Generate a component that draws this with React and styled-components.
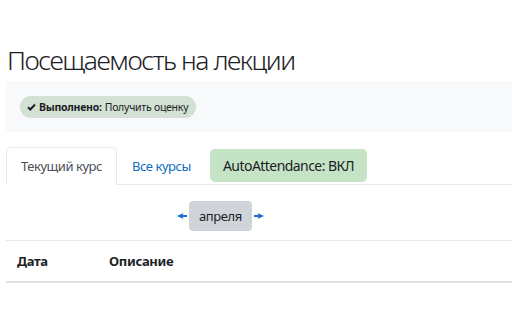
import * as React from "react"
import styled, { createGlobalStyle } from "styled-components"

const GlobalStyle = createGlobalStyle`
  html, body {
    margin: 0;
    padding: 0;
    background: #fff;
    font-family: "Noto Sans", "Open Sans", sans-serif;
    color: #1d2125;
  }
`

const Page = styled.div`
  padding: 0 0 0 6px;
  width: 512px;
  overflow: hidden;
`

const Title = styled.h2`
  margin: 0;
  padding: 44px 0 0 1px;
  height: 37px;
  font-size: 26.5px;
  font-weight: 300;
  line-height: 32px;
  color: #1d2125;
  letter-spacing: -1.45px;
`

const Activity = styled.div`
  background: #f8f9fa;
  height: 51px;
  display: flex;
  align-items: center;
  padding-left: 14px;
  border-radius: 4px 0 0 4px;
`

const Badge = styled.span`
  display: inline-flex;
  align-items: center;
  gap: 3px;
  height: 22px;
  padding: 0 8px 0 7px;
  border-radius: 11px;
  background: #d3e1d4;
  font-size: 10.5px;
  letter-spacing: -0.25px;
  color: #1d2125;

  b {
    font-weight: 700;
  }
`

const Tabs = styled.div`
  margin-top: 15px;
  display: flex;
  align-items: flex-end;
  border-bottom: 1px solid #e6e8eb;
  height: 37px;
`

const Tab = styled.a`
  display: flex;
  align-items: center;
  box-sizing: border-box;
  padding: 0 14px;
  margin-bottom: -1px;
  height: 38px;
  font-size: 13px;
  letter-spacing: -0.45px;
  text-decoration: none;
  color: ${p => (p.$active ? "#495057" : "#0f6cbf")};
  background: ${p => (p.$active ? "#fff" : "transparent")};
  border: 1px solid ${p => (p.$active ? "#e6e8eb" : "transparent")};
  border-bottom-color: ${p => (p.$active ? "#fff" : "transparent")};
  border-radius: 5px 5px 0 0;
`

const ToggleButton = styled.button`
  align-self: center;
  margin-left: 4px;
  height: 33px;
  padding: 0 13px;
  border: none;
  border-radius: 5px;
  background: #c5e4c6;
  font-family: inherit;
  font-size: 14px;
  letter-spacing: -0.55px;
  color: #1d2125;
`

const MonthRow = styled.div`
  display: flex;
  align-items: center;
  padding: 6px 0 0 171px;
  height: 49px;
  gap: 2px;
  border-bottom: 1px solid #e6e8eb;
`

const Month = styled.span`
  display: inline-flex;
  align-items: center;
  height: 30px;
  padding: 0 10px;
  border-radius: 4px;
  background: #ced4da;
  font-size: 13px;
  letter-spacing: -0.4px;
  color: #1d2125;
`

const TableHead = styled.div`
  display: grid;
  grid-template-columns: 92px 1fr;
  height: 40px;
  align-items: center;
  padding-left: 11px;
  border-bottom: 2px solid #dee2e6;
`

const Th = styled.span`
  font-size: 13px;
  font-weight: 700;
  letter-spacing: -0.3px;
  color: #1d2125;
`

const Arrow = ({ dir }) => (
  <svg width="10" height="6" viewBox="0 0 10 6">
    <g transform={dir === "right" ? "translate(10 0) scale(-1 1)" : undefined}>
      <path d="M0 3 L6.5 0 L5.5 2 L10 2 L10 4 L5.5 4 L6.5 6 Z" fill="#1a6dc9" />
    </g>
  </svg>
)

const Check = () => (
  <svg width="9" height="8" viewBox="0 0 9 8">
    <path d="M1 4.2 L3.3 6.5 L8 1.5" stroke="#1d2125" strokeWidth="2" fill="none" />
  </svg>
)

export default function App() {
  return (
    <Page>
      <GlobalStyle />
      <Title>Посещаемость на лекции</Title>
      <Activity>
        <Badge>
          <Check />
          <b>Выполнено:</b> Получить оценку
        </Badge>
      </Activity>
      <Tabs>
        <Tab $active>Текущий курс</Tab>
        <Tab>Все курсы</Tab>
        <ToggleButton>AutoAttendance: ВКЛ</ToggleButton>
      </Tabs>
      <MonthRow>
        <Arrow dir="left" />
        <Month>апреля</Month>
        <Arrow dir="right" />
      </MonthRow>
      <TableHead>
        <Th>Дата</Th>
        <Th>Описание</Th>
      </TableHead>
    </Page>
  )
}
